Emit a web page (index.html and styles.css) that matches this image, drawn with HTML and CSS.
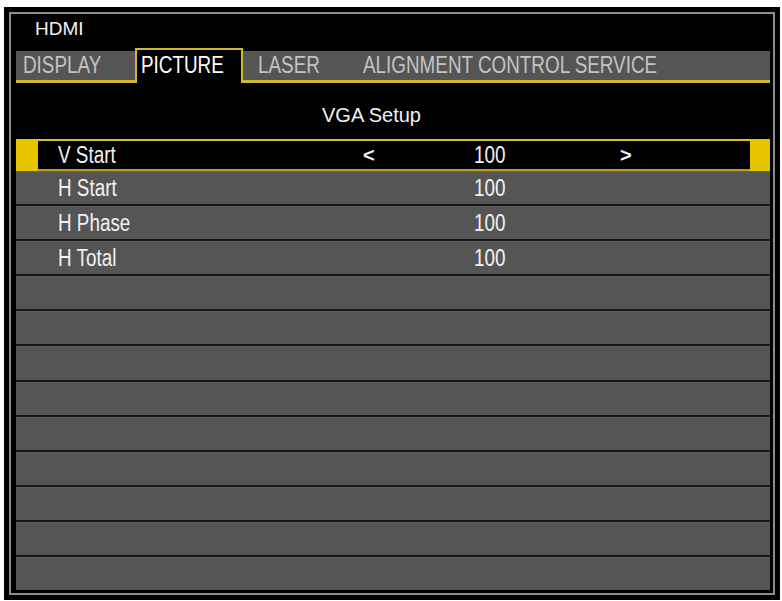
FILE: index.html
```html
<!DOCTYPE html>
<html lang="en">
<head>
    <meta charset="UTF-8">
    <title>HDMI - Picture</title>
    <link rel="stylesheet" href="styles.css">
</head>
<body>
    <div class="frame">
        <div class="screen">
            <div class="source">HDMI</div>
            <div class="tabs">
                <div class="tab tab-display"><span class="narrow">DISPLAY</span></div>
                <div class="tab tab-picture active"><span class="narrow">PICTURE</span></div>
                <div class="tab tab-laser"><span class="narrow">LASER</span></div>
                <div class="tab tab-service"><span class="narrow">ALIGNMENT CONTROL SERVICE</span></div>
            </div>
            <div class="subtitle">VGA Setup</div>
            <div class="rows">
                <div class="row selected">
                    <span></span>
                    <span class="label"><span class="narrow">V Start</span></span>
                    <span class="arrow">&lt;</span>
                    <span class="value"><span class="narrow">100</span></span>
                    <span class="arrow">&gt;</span>
                </div>
                <div class="row">
                    <span></span>
                    <span class="label"><span class="narrow">H Start</span></span>
                    <span></span>
                    <span class="value"><span class="narrow">100</span></span>
                    <span></span>
                </div>
                <div class="row">
                    <span></span>
                    <span class="label"><span class="narrow">H Phase</span></span>
                    <span></span>
                    <span class="value"><span class="narrow">100</span></span>
                    <span></span>
                </div>
                <div class="row">
                    <span></span>
                    <span class="label"><span class="narrow">H Total</span></span>
                    <span></span>
                    <span class="value"><span class="narrow">100</span></span>
                    <span></span>
                </div>
                <div class="row"></div>
                <div class="row"></div>
                <div class="row"></div>
                <div class="row"></div>
                <div class="row"></div>
                <div class="row"></div>
                <div class="row"></div>
                <div class="row"></div>
                <div class="row"></div>
            </div>
        </div>
    </div>
</body>
</html>
```

FILE: styles.css
```css
body {
    margin: 0;
    background-color: #fff;
    font-family: 'Liberation Sans', Arial, sans-serif;
}
.frame {
    width: 776px;
    height: 593px;
    margin: 7px 0 0 4px;
    padding: 5px;
    box-sizing: border-box;
    background-color: #000;
}
.screen {
    height: 100%;
    box-sizing: border-box;
    border: 2px solid #8c8c8c;
    padding: 0 3px 3px 5px;
    display: flex;
    flex-direction: column;
}
/* the menu font is a condensed sans, squeeze the regular one */
.narrow {
    display: inline-block;
    transform: scaleX(0.82);
    transform-origin: left center;
    white-space: nowrap;
}
.source {
    height: 34px;
    padding-left: 19px;
    font-size: 19px;
    line-height: 30px;
    color: #f2f2f2;
}
.tabs {
    display: flex;
    height: 29px;
    margin-top: 3px;
    background-color: #555;
    border-bottom: 3px solid #d2b62c;
    font-size: 23px;
    line-height: 29px;
    color: #c4c4c4;
}
.tab {
    box-sizing: border-box;
    white-space: nowrap;
}
.tab-display {
    width: 119px;
    padding-left: 7px;
}
.tab-picture {
    width: 108px;
    padding-left: 4px;
}
.tab-laser {
    width: 113px;
    padding-left: 15px;
}
.tab-service {
    padding-left: 7px;
}
.tab.active {
    margin: -3px 0 -3px;
    border: 2px solid #d2b62c;
    border-bottom: none;
    background-color: #000;
    color: #fff;
    line-height: 30px;
}
.subtitle {
    height: 56px;
    box-sizing: border-box;
    padding: 17px 43px 0 0;
    text-align: center;
    font-size: 20px;
    line-height: 30px;
    color: #f0f0f0;
}
.rows {
    flex: 1;
    display: flex;
    flex-direction: column;
    gap: 2px;
    background-color: #161616;
}
.row {
    flex: 1;
    display: grid;
    grid-template-columns: 42px 305px 111px 146px 1fr;
    align-items: center;
    background-color: #555;
    border-top: 1px solid #5f5f5f;
    font-size: 23px;
    color: #f2f2f2;
}
.row.selected {
    margin-bottom: -2px;
    border-top: none;
    background-color: #000;
    box-shadow: inset 22px 0 0 #e6c400, inset -20px 0 0 #e6c400,
        inset 0 2px 0 #d8bc20, inset 0 -2px 0 #b89e22;
}
.arrow {
    font-size: 20px;
    font-weight: bold;
}
```
